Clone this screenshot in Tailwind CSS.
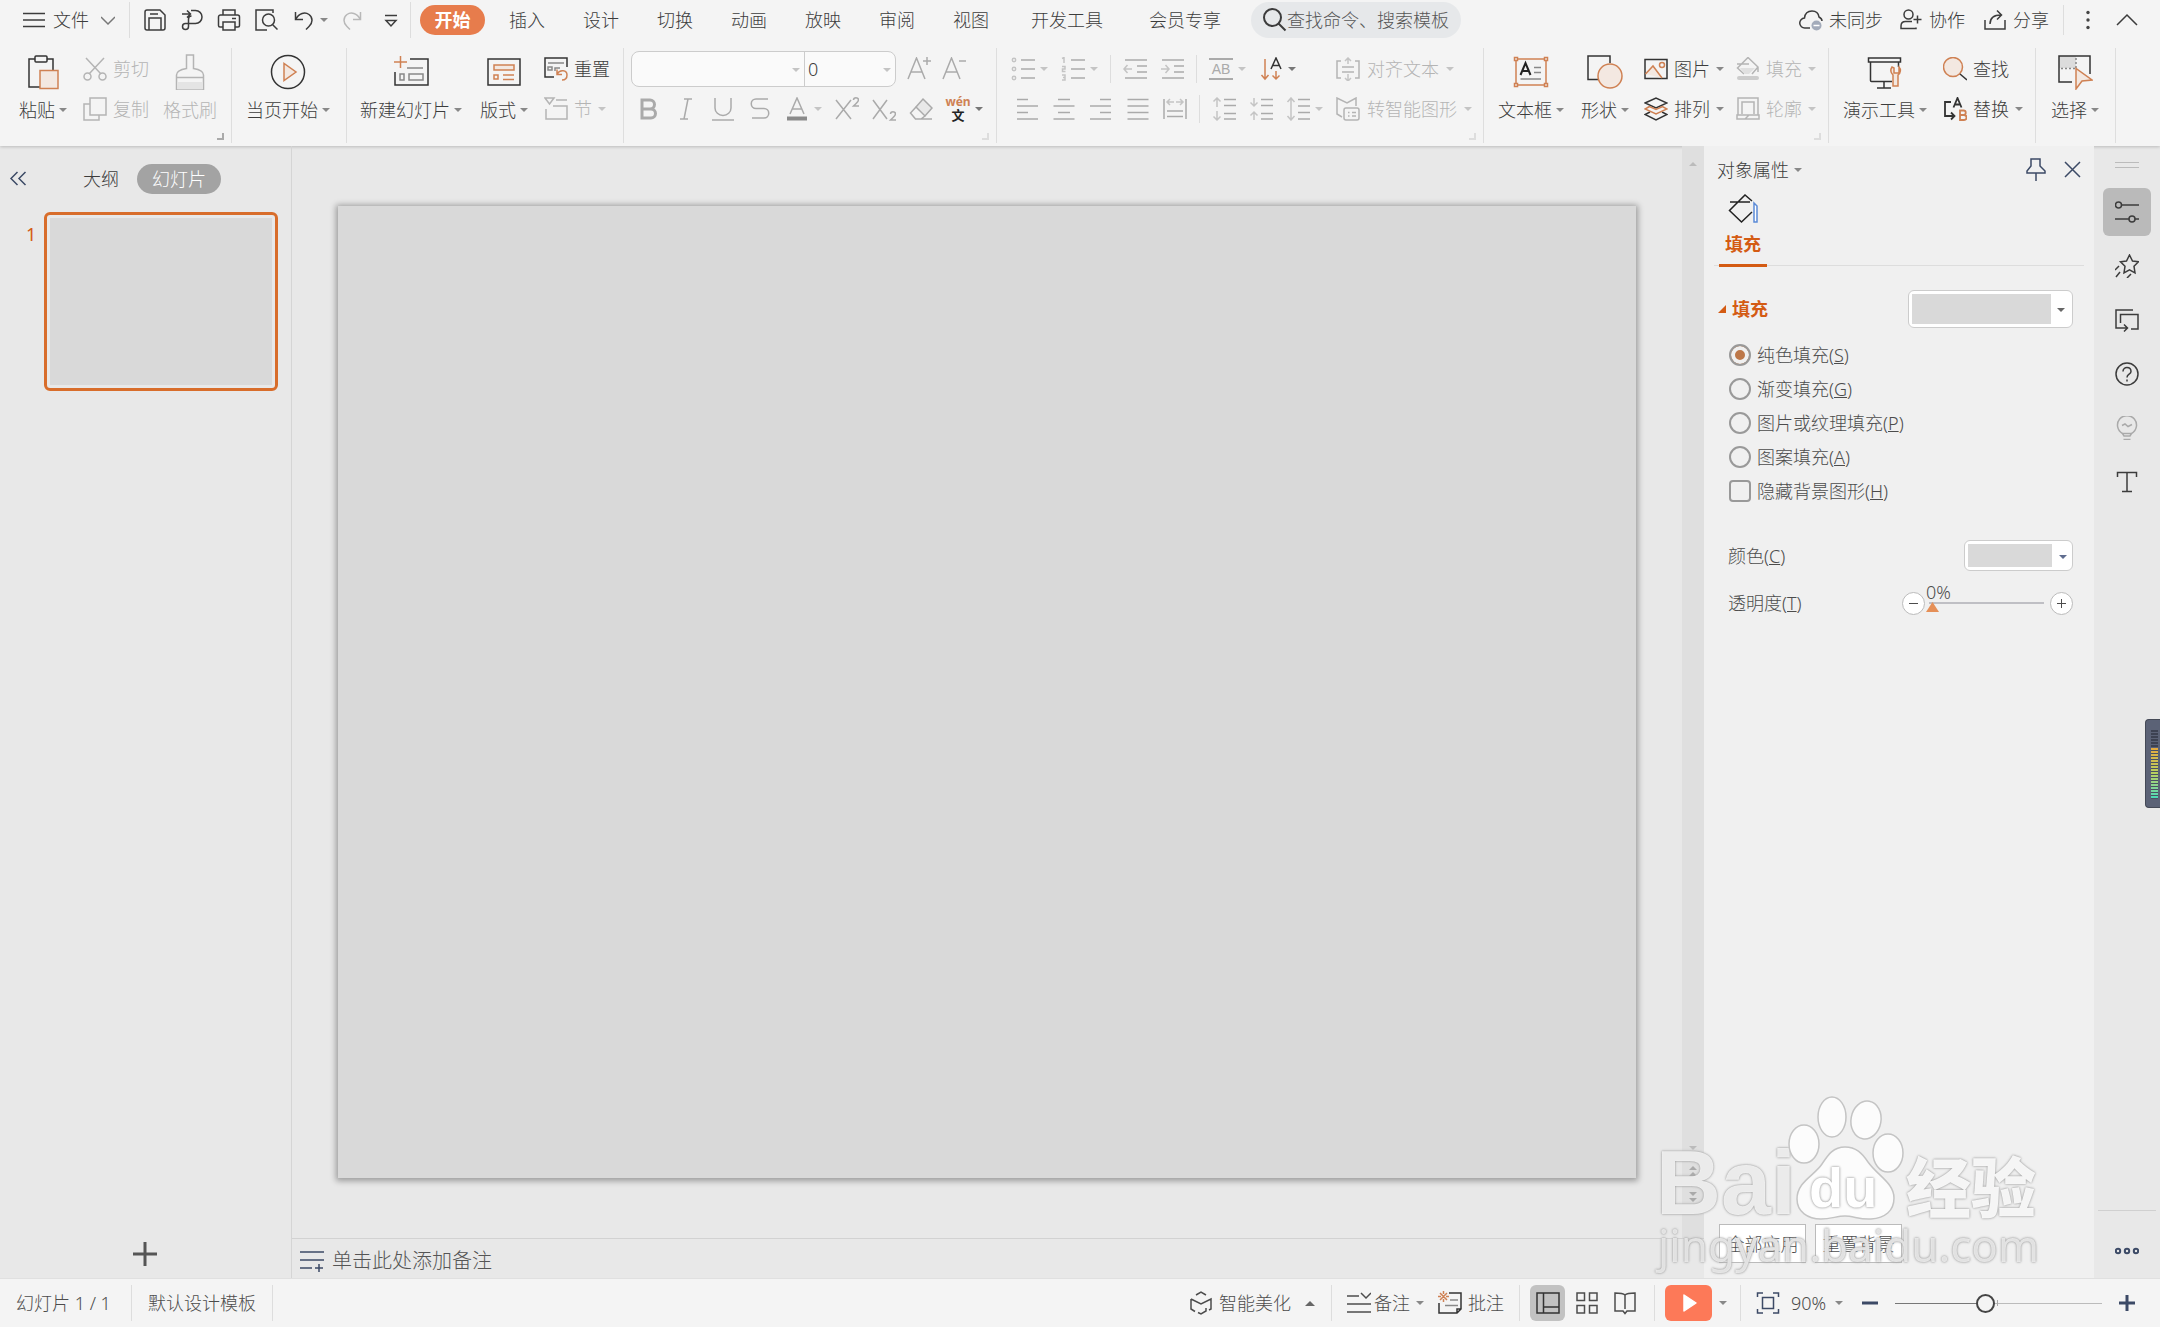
<!DOCTYPE html>
<html lang="zh-CN">
<head>
<meta charset="utf-8">
<title>演示文稿</title>
<script src="https://cdn.jsdelivr.net/npm/@tailwindcss/browser@4"></script>
</head>
<body class="flex h-screen flex-col overflow-hidden bg-[#e8e8e8] font-['Noto_Sans','Noto_Sans_CJK_SC',sans-serif] text-[18px] leading-6 font-light text-[#3c3c3c] [&_button]:shrink-0 [&_button]:whitespace-nowrap [&_svg]:shrink-0 [&_svg]:fill-none [&_svg]:stroke-current [&_svg]:stroke-[1.5px]">

<header class="shrink-0 bg-[#f4f4f4] shadow-[0_1px_3px_#00000030]">
  <!-- menu bar -->
  <div class="flex h-10 items-center pl-[22px] pr-[21px]">
    <button class="flex items-center">
      <svg class="size-6" viewBox="0 0 24 24"><path d="M1 5.500h22M1 12h22M1 18.500h22"/></svg>
      <span class="ml-[7px]">文件</span>
      <svg class="ml-3 w-3.5 h-6" viewBox="0 0 14 24"><path stroke="#777" d="M0 9l7 7 7-7"/></svg>
    </button>
    <span class="ml-3.5 h-9 w-px bg-[#ddd]"></span>
    <div class="ml-[13px] flex items-center gap-[13px]">
      <button aria-label="保存"><svg class="size-6" viewBox="0 0 24 24"><path d="M4 2h13l5 5v13a2 2 0 0 1-2 2H4a2 2 0 0 1-2-2V4a2 2 0 0 1 2-2zM6 22V10h12v12M7 6h8"/></svg></button>
      <button aria-label="输出"><svg class="size-6" viewBox="0 0 24 24"><path d="M2 6h8M7 2.500L10.500 6 7 9.500M11 2.500h4.500a6 6 0 0 1 0 13H5.500a3 3 0 1 0 3 3V11a3 3 0 0 1 3-3"/></svg></button>
      <button aria-label="打印"><svg class="size-6" viewBox="0 0 24 24"><path d="M6 7V2h12v5M6 19H3a1.500 1.500 0 0 1-1.500-1.500V9A2 2 0 0 1 3.500 7h17a2 2 0 0 1 2 2v8.500A1.500 1.500 0 0 1 21 19h-3M6 14h12v8H6zM15 10.500h4"/></svg></button>
      <button aria-label="打印预览"><svg class="size-6" viewBox="0 0 24 24"><path d="M19 5V2H2v20h11"/><circle cx="14.500" cy="12" r="6"/><path d="M18.500 16.500l5 5"/></svg></button>
      <button class="flex items-center gap-[5px]" aria-label="撤销"><svg class="size-6" viewBox="0 0 24 24"><path d="M4.500 4v7.500H12M4.500 11.500C8 5 14 3.500 18 6.500s4 8 0 12l-3 3"/></svg><i class="border-x-4 border-t-4 border-x-transparent border-t-[#888]"></i></button>
      <button class="text-[#b8b8b8]" aria-label="恢复"><svg class="size-6" viewBox="0 0 24 24"><path d="M19.500 4v7.500H12M19.500 11.500C16 5 10 3.500 6 6.500s-4 8 0 12l3 3"/></svg></button>
      <button aria-label="自定义快速访问工具栏"><svg class="size-6" viewBox="0 0 24 24"><path d="M7 7.500h12M8 12.500l5 5.500 5-5.500z"/></svg></button>
    </div>
    <span class="ml-2 h-9 w-px bg-[#ddd]"></span>
    <nav class="flex items-center">
      <button class="ml-[9px] mr-[5px] h-[30px] w-[65px] rounded-full bg-[#e77c4c] font-bold text-white">开始</button>
      <button class="w-[74px]">插入</button><button class="w-[74px]">设计</button><button class="w-[74px]">切换</button><button class="w-[74px]">动画</button><button class="w-[74px]">放映</button><button class="w-[74px]">审阅</button><button class="w-[74px]">视图</button>
      <button class="w-[118px]">开发工具</button><button class="w-[118px]">会员专享</button>
    </nav>
    <label class="ml-[7px] flex h-9 w-[210px] items-center rounded-full bg-[#e6e8ea] pl-3">
      <svg class="size-6" viewBox="0 0 24 24"><circle cx="9.500" cy="9.500" r="8.500" stroke-width="2"/><path stroke-width="2" d="M15.500 15.500l7 7"/></svg>
      <input class="w-[170px] bg-transparent font-light outline-none placeholder:text-[#555]" placeholder="查找命令、搜索模板" aria-label="查找命令、搜索模板">
    </label>
    <div class="ml-auto flex items-center">
      <button class="flex items-center gap-1.5"><svg class="size-6" viewBox="0 0 24 24"><path d="M11 20H6a5 5 0 0 1-.5-10C6 5.500 9 3 13 3c4 0 6.500 2.500 7 6 1.500.7 3 2 3 4"/><circle cx="17.500" cy="17.500" r="5" fill="#a3abba" stroke="none"/><path stroke="#fff" d="M14.500 17.500h6"/></svg>未同步</button>
      <button class="ml-4 flex items-center gap-1.5"><svg class="size-6" viewBox="0 0 24 24"><circle cx="9.500" cy="6.500" r="4.500"/><path d="M17 19.500v1H2v-2.500c0-3 2-4.500 4.500-4.500H13M18.500 7.500v8M14.500 11.500h8"/></svg>协作</button>
      <button class="ml-[18px] flex items-center gap-1.5"><svg class="size-6" viewBox="0 0 24 24"><path d="M2 12v9h20v-9M7 16c0-6 4-9 11-9M14 2.500L18.500 7 14 11.500"/></svg>分享</button>
      <span class="ml-3.5 h-[30px] w-px bg-[#ddd]"></span>
      <button class="ml-3" aria-label="更多"><svg class="size-6" viewBox="0 0 24 24"><g fill="#444" stroke="none"><circle cx="12" cy="4.500" r="1.700"/><circle cx="12" cy="12" r="1.700"/><circle cx="12" cy="19.500" r="1.700"/></g></svg></button>
      <button class="ml-[15px]" aria-label="折叠功能区"><svg class="size-6" viewBox="0 0 24 24"><path d="M2 17L12 7l10 10"/></svg></button>
    </div>
  </div>

  <!-- ribbon -->
  <div class="flex h-[106px] pt-2 [&>section]:relative [&>section]:flex [&>section]:h-[95px] [&>section]:shrink-0 [&>section]:border-r [&>section]:border-[#dedede]">
    <section class="pl-[19px] pr-3.5">
      <button class="flex flex-col items-center"><span class="flex h-12 items-center"><svg class="size-9" viewBox="0 0 36 36"><path stroke="#333" d="M15 33H4V5h6M22 5h6v11"/><rect x="10" y="2" width="12" height="6" rx="1" stroke="#333"/><rect x="15" y="16.500" width="18" height="18" fill="#f3e8e1" stroke="#cf8153"/></svg></span><span class="flex h-7 items-center gap-1">粘贴<i class="border-x-4 border-t-4 border-x-transparent border-t-[#888]"></i></span></button>
      <div class="ml-4 pt-px text-[#b4b4b4]">
        <button class="flex h-10 items-center gap-1.5"><svg class="size-6" viewBox="0 0 24 24"><path d="M3 1l15 16M21 1L6 17"/><circle cx="4.500" cy="19.500" r="3.500"/><circle cx="19.500" cy="19.500" r="3.500"/></svg>剪切</button>
        <button class="flex h-10 items-center gap-1.5"><svg class="size-6" viewBox="0 0 24 24"><path d="M7 1h16v17H7zM7 7H1v16h15v-5"/></svg>复制</button>
      </div>
      <button class="ml-3.5 flex flex-col items-center text-[#b4b4b4]"><span class="flex h-12 items-center"><svg class="size-9" viewBox="0 0 36 36"><path d="M14.500 1h7v13.500c6 1 10 2.500 10 6.500v15h-27V21c0-4 4-5.500 10-6.500zM4.500 23.500h27"/><path fill="#e4e4e4" stroke="none" d="M5 28h26v7H5z"/></svg></span><span class="flex h-7 items-center">格式刷</span></button>
      <i class="absolute right-[7px] bottom-[3px] size-[7px] border-r-2 border-b-2 border-[#aaa]"></i>
    </section>
    <section class="pl-3.5 pr-4">
      <button class="flex flex-col items-center"><span class="flex h-12 items-center"><svg class="size-9" viewBox="0 0 36 36"><circle cx="18" cy="18" r="16.500" stroke="#333"/><path fill="#f3e8e1" stroke="#cf8153" d="M14 9.500v17L26 18z"/></svg></span><span class="flex h-7 items-center gap-1">当页开始<i class="border-x-4 border-t-4 border-x-transparent border-t-[#888]"></i></span></button>
    </section>
    <section class="px-[13px]">
      <button class="flex flex-col items-center"><span class="flex h-12 items-center"><svg class="size-9" viewBox="0 0 36 36"><path stroke="#333" d="M17 5h18v26H2V18"/><path stroke="#cf8153" d="M7.500 2v12M1 8h13"/><path stroke="#888" d="M14 14h16M7 20h4v6H7zM16 20h14v6H16z"/></svg></span><span class="flex h-7 items-center gap-1">新建幻灯片<i class="border-x-4 border-t-4 border-x-transparent border-t-[#888]"></i></span></button>
      <button class="ml-[18px] flex flex-col items-center"><span class="flex h-12 items-center"><svg class="size-9" viewBox="0 0 36 36"><path stroke="#333" d="M2 5h32v26H2z"/><path fill="#f3e8e1" stroke="#cf8153" d="M8 11h20v5H8z"/><path stroke="#cf8153" d="M8 21h4v4H8zM17 21h11M17 25.500h11"/></svg></span><span class="flex h-7 items-center gap-1">版式<i class="border-x-4 border-t-4 border-x-transparent border-t-[#888]"></i></span></button>
      <div class="ml-4 pt-px">
        <button class="flex h-10 items-center gap-1.5"><svg class="size-6" viewBox="0 0 24 24"><path stroke="#333" d="M10 20H1V1h22v9"/><path stroke="#888" d="M4 6h16M4 10h4v3H4zM11 14v-3h5"/><path stroke="#cf8153" d="M13 12.500v5h5M13 17c3-5 10-4 10 1 0 3-2 5-5 5"/></svg>重置</button>
        <button class="flex h-10 items-center gap-1.5 text-[#b4b4b4]"><svg class="size-6" viewBox="0 0 24 24"><path d="M1 1h9L5.500 7zM12 3h11M2 12v10h21V9H9"/></svg>节<i class="border-x-4 border-t-4 border-x-transparent border-t-[#c4c4c4]"></i></button>
      </div>
    </section>
    <section class="flex-col! pr-[13px] pt-px text-[#aaa]">
      <div class="flex h-10 items-center pl-[7px]">
        <div class="flex h-9 w-[265px] rounded-lg border border-[#ccc] bg-[#fafafa]">
          <div class="relative flex-1"><select aria-label="字体" class="size-full appearance-none outline-none"><option></option></select><i class="pointer-events-none absolute top-4 right-1 border-x-4 border-t-4 border-x-transparent border-t-[#c4c4c4]"></i></div>
          <div class="relative w-[91px] border-l border-[#ccc]"><select aria-label="字号" class="size-full appearance-none pl-[3px] text-[#3c3c3c] outline-none"><option>0</option></select><i class="pointer-events-none absolute top-4 right-1 border-x-4 border-t-4 border-x-transparent border-t-[#c4c4c4]"></i></div>
        </div>
        <button class="ml-[11px]" aria-label="增大字号"><svg class="size-6" viewBox="0 0 24 24"><path d="M1 22L9.500 1 18 22M4 15h11M16 4h8M20 0v8"/></svg></button>
        <button class="ml-[11px]" aria-label="减小字号"><svg class="size-6" viewBox="0 0 24 24"><path d="M1 22L9.500 1 18 22M4 15h11M17 4h7"/></svg></button>
      </div>
      <div class="flex h-10 items-center gap-[13px] pl-[13px]">
        <button aria-label="加粗"><svg class="size-6" viewBox="0 0 24 24"><path stroke-width="3" d="M5 3h8a4.500 4.500 0 0 1 0 9H5zM5 12h9a4.500 4.500 0 0 1 0 9H5z"/></svg></button>
        <button aria-label="倾斜"><svg class="size-6" viewBox="0 0 24 24"><path d="M10 2h8M6 22h8M14 2l-4 20"/></svg></button>
        <button aria-label="下划线"><svg class="size-6" viewBox="0 0 24 24"><path d="M4 1v10a8 7.500 0 0 0 16 0V1M1 23h22"/></svg></button>
        <button aria-label="删除线"><svg class="size-6" viewBox="0 0 24 24"><path d="M20 2H8a4.500 4.500 0 0 0 0 9.500h8a4.500 4.500 0 0 1 0 9.500H4"/></svg></button>
        <button class="flex items-center gap-[5px]" aria-label="字体颜色"><svg class="size-6" viewBox="0 0 24 24"><path d="M5 17L12 1l7 16M7.500 12h9"/><path stroke="#8a8a8a" stroke-width="4" d="M2 21.500h20"/></svg><i class="border-x-4 border-t-4 border-x-transparent border-t-[#c4c4c4]"></i></button>
        <button aria-label="上标"><svg class="size-6" viewBox="0 0 24 24"><path d="M1 3l15 19M16 3L1 22M18.500 3c0-3 5-3 5 0 0 1.500-1 2-5 6h5.500"/></svg></button>
        <button aria-label="下标"><svg class="size-6" viewBox="0 0 24 24"><path d="M1 3l14 19M15 3L1 22M18.500 17c0-3 5-3 5 0 0 1.500-1 2-5 6h5.500"/></svg></button>
        <button aria-label="清除格式"><svg class="size-6" viewBox="0 0 24 24"><path fill="#e8e8e8" d="M14 2l9 9-7 8L7 10z"/><path d="M7 10l-5.500 6 5 6H12l4-3M12 22h11"/></svg></button>
        <button class="flex items-center gap-[5px]" aria-label="拼音指南"><span class="flex w-6 flex-col items-center font-bold"><span class="text-[12px] leading-3 text-[#cf8153]">wén</span><span class="text-[13px] leading-[14px] text-[#222]">文</span></span><i class="border-x-4 border-t-4 border-x-transparent border-t-[#777]"></i></button>
      </div>
      <i class="absolute right-[7px] bottom-[3px] size-[7px] border-r-2 border-b-2 border-[#ddd]"></i>
    </section>
    <section class="pt-px pr-[11px] text-[#aaa]">
      <div>
        <div class="flex h-10 items-center gap-[13px] pl-3.5">
          <button class="flex items-center gap-[5px]" aria-label="项目符号"><svg class="size-6" viewBox="0 0 24 24"><path d="M10 3h14M10 12h14M10 21h14"/><g stroke="#c4c4c4"><circle cx="3" cy="3" r="1.700"/><circle cx="3" cy="12" r="1.700"/><circle cx="3" cy="21" r="1.700"/></g></svg><i class="border-x-4 border-t-4 border-x-transparent border-t-[#c4c4c4]"></i></button>
          <button class="flex items-center gap-[5px]" aria-label="编号"><svg class="size-6" viewBox="0 0 24 24"><path d="M10 3h14M10 12h14M10 21h14"/><path stroke="#c4c4c4" d="M1 1.500L3 .5V6M1 9.500h3V12H1.500v2.500H4.500M1 18h3v5H1M2 20.500h2"/></svg><i class="border-x-4 border-t-4 border-x-transparent border-t-[#c4c4c4]"></i></button>
          <span class="-mx-px h-7 w-px bg-[#ddd]"></span>
          <button aria-label="减少缩进量"><svg class="size-6" viewBox="0 0 24 24"><path d="M2 3h22M14 9h10M14 15h10M2 21h22"/><path stroke="#c4c4c4" d="M9 12H1M4.500 8L1 12l3.500 4"/></svg></button>
          <button aria-label="增加缩进量"><svg class="size-6" viewBox="0 0 24 24"><path d="M2 3h22M14 9h10M14 15h10M2 21h22"/><path stroke="#c4c4c4" d="M1 12h8M5.500 8L9 12l-3.500 4"/></svg></button>
          <span class="-mx-px h-7 w-px bg-[#ddd]"></span>
          <button class="flex items-center gap-[5px]" aria-label="字符间距"><span class="w-6 border-y-2 border-[#aaa] py-px text-center font-['Liberation_Sans'] text-[14px] leading-4 font-normal">AB</span><i class="border-x-4 border-t-4 border-x-transparent border-t-[#c4c4c4]"></i></button>
          <button class="flex items-center gap-[5px]" aria-label="文字方向"><svg class="size-6" viewBox="0 0 24 24"><path stroke="#cf8153" d="M6 2v20M2.500 18L6 22l3.500-4M17 14v8M13.500 18.500L17 22l3.500-3.500"/><path stroke="#333" d="M12 12l5-11 5 11M13.500 8.500h7"/></svg><i class="border-x-4 border-t-4 border-x-transparent border-t-[#777]"></i></button>
        </div>
        <div class="flex h-10 items-center gap-[13px] pl-[18px]">
          <button aria-label="左对齐"><svg class="size-6" viewBox="0 0 24 24"><path d="M2 2.500h11M2 9h21M2 15.500h11M2 22h21"/></svg></button>
          <button aria-label="居中对齐"><svg class="size-6" viewBox="0 0 24 24"><path d="M6 2.500h12M1.500 9h21M6 15.500h12M1.500 22h21"/></svg></button>
          <button aria-label="右对齐"><svg class="size-6" viewBox="0 0 24 24"><path d="M11 2.500h11M1 9h21M11 15.500h11M1 22h21"/></svg></button>
          <button aria-label="两端对齐"><svg class="size-6" viewBox="0 0 24 24"><path d="M1.500 2.500h21M1.500 9h21M1.500 15.500h21M1.500 22h21"/></svg></button>
          <button aria-label="分散对齐"><svg class="size-6" viewBox="0 0 24 24"><path d="M1 2v20M23 2v20M4 14h16M4 19.500h16"/><path stroke="#c4c4c4" d="M4 5h7M13 5h7M7 2L4 5l3 3M17 2l3 3-3 3"/></svg></button>
          <span class="-mx-px h-7 w-px bg-[#ddd]"></span>
          <button aria-label="增大段落间距"><svg class="size-6" viewBox="0 0 24 24"><path d="M12 2.500h12M12 8.500h12M12 16.500h12M12 22h12"/><path stroke="#c4c4c4" d="M5 10V1M1.500 4.500L5 1l3.500 3.500M5 14v9M1.500 19.500L5 23l3.500-3.500"/></svg></button>
          <button aria-label="减小段落间距"><svg class="size-6" viewBox="0 0 24 24"><path d="M12 2.500h12M12 8.500h12M12 16.500h12M12 22h12"/><path stroke="#c4c4c4" d="M5 1v8M1.500 5.500L5 9l3.500-3.500M5 23v-8M1.500 18.500L5 15l3.500 3.500"/></svg></button>
          <button class="flex items-center gap-[5px]" aria-label="行距"><svg class="size-6" viewBox="0 0 24 24"><path d="M12 2.500h12M12 9h12M12 15.500h12M12 22h12"/><path stroke="#c4c4c4" d="M5 1v22M1.500 5L5 1l3.500 4M1.500 19L5 23l3.500-4"/></svg><i class="border-x-4 border-t-4 border-x-transparent border-t-[#c4c4c4]"></i></button>
        </div>
      </div>
      <div class="ml-[13px] text-[#b4b4b4]">
        <button class="flex h-10 items-center gap-[7px]"><svg class="size-6" viewBox="0 0 24 24"><path d="M5 4H1v17h4M19 4h4v17h-4M6 10h12M6 15h12"/><path stroke="#c4c4c4" d="M12 7V1M9 4l3-3 3 3M12 17v7M9 21l3 3 3-3"/></svg>对齐文本<i class="border-x-4 border-t-4 border-x-transparent border-t-[#c4c4c4]"></i></button>
        <button class="flex h-10 items-center gap-[7px]"><svg class="size-6" viewBox="0 0 24 24"><path d="M6 20l-5-3V1l10 5 9-5v8"/><rect x="8" y="11" width="15" height="12" rx="2"/><path d="M12 15.500h1.500M16 15.500h4M12 19h1.500M16 19h4"/></svg>转智能图形<i class="border-x-4 border-t-4 border-x-transparent border-t-[#c4c4c4]"></i></button>
      </div>
      <i class="absolute right-[7px] bottom-[3px] size-[7px] border-r-2 border-b-2 border-[#ddd]"></i>
    </section>
    <section class="pl-3.5 pr-3">
      <button class="flex flex-col items-center"><span class="flex h-12 items-center"><svg class="size-9" viewBox="0 0 36 36"><path stroke="#cf8153" d="M3 5h30v26H3z"/><g fill="#f4f4f4" stroke="#cf8153"><rect x="1.500" y="3.500" width="3" height="3"/><rect x="31.500" y="3.500" width="3" height="3"/><rect x="1.500" y="29.500" width="3" height="3"/><rect x="31.500" y="29.500" width="3" height="3"/></g><path stroke="#222" stroke-width="2" d="M7.500 21l5-12 5 12M9 17h7"/><path stroke="#888" d="M21 13.500h7M21 18.500h7M7.500 25h20.500"/></svg></span><span class="flex h-7 items-center gap-1">文本框<i class="border-x-4 border-t-4 border-x-transparent border-t-[#888]"></i></span></button>
      <button class="ml-[17px] flex flex-col items-center"><span class="flex h-12 items-center"><svg class="size-9" viewBox="0 0 36 36"><path stroke="#333" d="M11 25.500H1V2h22v7"/><circle cx="23" cy="22" r="12" fill="#f3e8e1" stroke="#cf8153"/></svg></span><span class="flex h-7 items-center gap-1">形状<i class="border-x-4 border-t-4 border-x-transparent border-t-[#888]"></i></span></button>
      <div class="ml-[15px] pt-px">
        <button class="flex h-10 items-center gap-1.5"><svg class="size-6" viewBox="0 0 24 24"><path stroke="#333" d="M1 2.500h22v19H1z"/><path fill="#f3e8e1" stroke="#cf8153" d="M1.500 17L9 9l9 12"/><circle cx="18" cy="8" r="2.500" stroke="#cf8153"/></svg>图片<i class="border-x-4 border-t-4 border-x-transparent border-t-[#888]"></i></button>
        <button class="flex h-10 items-center gap-1.5"><svg class="size-6" viewBox="0 0 24 24"><path stroke="#333" d="M1 6l11-5 11 5-11 5zM6 15l-5 2.500L12 23l11-5.500-5-2.500"/><path stroke="#cf8153" d="M5.500 9.500L1 12l11 5 11-5-4.500-2.500-6.500 3z"/></svg>排列<i class="border-x-4 border-t-4 border-x-transparent border-t-[#888]"></i></button>
      </div>
      <div class="ml-3 pt-px text-[#b4b4b4]">
        <button class="flex h-10 items-center gap-1.5"><svg class="size-6" viewBox="0 0 24 24"><path d="M1 7h12M22 15v-5L12 .5 1.500 11 8 17M22 10l-6 7"/><path fill="#e0e0e0" stroke="none" d="M4 11h15l-6 6H9z"/><path stroke="#ccc" stroke-width="4" stroke-linecap="round" d="M3 21h18"/></svg>填充<i class="border-x-4 border-t-4 border-x-transparent border-t-[#c4c4c4]"></i></button>
        <button class="flex h-10 items-center gap-1.5"><svg class="size-6" viewBox="0 0 24 24"><path d="M2 18V1h20v17M6 17V5h12v12M1 18h22v4H1zM9 22l4-4"/></svg>轮廓<i class="border-x-4 border-t-4 border-x-transparent border-t-[#c4c4c4]"></i></button>
      </div>
      <i class="absolute right-[7px] bottom-[3px] size-[7px] border-r-2 border-b-2 border-[#ddd]"></i>
    </section>
    <section class="pl-3.5 pr-3">
      <button class="flex flex-col items-center"><span class="flex h-12 items-center"><svg class="size-9" viewBox="0 0 36 36"><path stroke="#333" d="M1.500 4h32v4h-32zM3.500 8v18.500a1 1 0 0 0 1 1H25M31.500 8v5M17 28v6M10 34h14"/><path fill="#f3e8e1" stroke="#cf8153" d="M25 13c-2 3-1 6 1 8v11h5V21c3-2 3-6 1-8v6h-5v-5z"/></svg></span><span class="flex h-7 items-center gap-1">演示工具<i class="border-x-4 border-t-4 border-x-transparent border-t-[#888]"></i></span></button>
      <div class="ml-4 pt-px">
        <button class="flex h-10 items-center gap-1.5"><svg class="size-6" viewBox="0 0 24 24"><circle cx="10" cy="10" r="9.500" fill="#f3e8e1" stroke="#cf8153"/><path stroke="#333" d="M17 17l7 6"/></svg>查找</button>
        <button class="flex h-10 items-center gap-1.5"><svg class="size-6" viewBox="0 0 24 24"><path stroke="#333" stroke-width="1.800" d="M8 5H2v14h9M8 15.500l3.500 3.500L8 22.500M10.500 10.500L14.500 1l4 9.500M12 7.500h5"/><path stroke="#cf8153" stroke-width="1.800" d="M17 13.500h3.500a2.200 2.200 0 0 1 0 4.500H17zM17 18h4a2.200 2.200 0 0 1 0 5H17z"/></svg>替换<i class="border-x-4 border-t-4 border-x-transparent border-t-[#888]"></i></button>
      </div>
    </section>
    <section class="pl-[15px] pr-4">
      <button class="flex flex-col items-center"><span class="flex h-12 items-center"><svg class="size-9" viewBox="0 0 36 36"><path fill="#dcdcdc" stroke="none" d="M2 2h17v12H2z"/><path stroke="#333" d="M15 28H2V2h31v18"/><path stroke="#888" stroke-dasharray="2 2" d="M4 14.500h14M19 4v10"/><path fill="#f3e8e1" stroke="#cf8153" d="M19 14.500v20.500l6-8 10-1z"/></svg></span><span class="flex h-7 items-center gap-1">选择<i class="border-x-4 border-t-4 border-x-transparent border-t-[#888]"></i></span></button>
    </section>
  </div>
</header>

<main class="flex min-h-0 flex-1">
  <!-- slide list -->
  <aside class="flex w-[292px] shrink-0 flex-col border-r border-[#d5d5d5]">
    <div class="mt-[18px] flex h-[30px] items-center pl-1.5">
      <button aria-label="收起"><svg class="size-6 text-[#3c4a66]" viewBox="0 0 24 24"><path d="M11.500 5L5 11.500l6.500 6.500M19.500 5L13 11.500l6.500 6.500"/></svg></button>
      <button class="ml-[53px]">大纲</button>
      <button class="ml-[18px] h-[30px] w-[84px] rounded-full bg-[#a3a3a3] text-white">幻灯片</button>
    </div>
    <div class="mt-[18px] flex pl-[26px]">
      <span class="mt-2.5 w-[18px] font-normal text-[#d45b13]">1</span>
      <button class="h-[179px] w-[234px] rounded-md border-3 border-[#d86d2b] p-[3px]" aria-label="幻灯片 1"><span class="block size-full bg-[#d9d9d9]"></span></button>
    </div>
    <button class="mt-auto mb-3 pr-0.5 self-center" aria-label="新建幻灯片"><svg class="size-6" viewBox="0 0 24 24"><path stroke="#555" stroke-width="3" d="M12 0v24M0 12h24"/></svg></button>
  </aside>

  <!-- slide canvas -->
  <div class="flex min-w-0 flex-1 flex-col">
    <div class="flex min-h-0 flex-1">
      <div class="flex-1 px-[46px] py-[60px]"><div class="h-full bg-[#d9d9d9] shadow-[0_1px_6px_2px_#00000055]"></div></div>
      <div class="flex w-[22px] flex-col items-center bg-[#dfdfdf] pt-4 pb-9">
        <i class="border-x-4 border-b-4 border-x-transparent border-b-[#bbb]"></i>
        <i class="mt-auto border-x-4 border-t-4 border-x-transparent border-t-[#bbb]"></i>
        <i class="mt-4 border-x-4 border-b-4 border-x-transparent border-b-[#aaa]"></i>
        <i class="mt-0.5 border-x-4 border-b-4 border-x-transparent border-b-[#aaa]"></i>
        <i class="mt-4 border-x-4 border-t-4 border-x-transparent border-t-[#aaa]"></i>
        <i class="mt-0.5 border-x-4 border-t-4 border-x-transparent border-t-[#aaa]"></i>
      </div>
    </div>
    <div class="flex h-10 items-center gap-2 border-t border-[#d2d2d2] pl-2 pt-1">
      <svg class="size-6 text-[#3c4a66]" viewBox="0 0 24 24"><path d="M0 3h24M0 11h24M0 19h12M15 19h8M19 15v8"/></svg>
      <span class="text-[20px] text-[#555]">单击此处添加备注</span>
    </div>
  </div>

  <!-- object properties -->
  <aside class="flex w-[390px] shrink-0 flex-col bg-[#f0f0f0] text-[#4c4c4c]">
    <div class="flex h-12 items-center pr-[9px] pl-[13px]">
      <button class="flex items-center gap-[5px] text-[#3c3c3c]">对象属性<i class="border-x-4 border-t-4 border-x-transparent border-t-[#888]"></i></button>
      <button class="ml-auto text-[#3c4a66]" aria-label="固定"><svg class="size-6" viewBox="0 0 24 24"><path d="M7 1h9v7l5 5v2H3v-2l4-5zM12 15v8"/></svg></button>
      <button class="ml-[13px] text-[#3c4a66]" aria-label="关闭"><svg class="size-6" viewBox="0 0 24 24"><path d="M4 4l15 15M19 4L4 19"/></svg></button>
    </div>
    <div class="mx-2.5 flex border-b border-[#ddd] pl-[5px]">
      <button class="-mb-0.5 flex w-12 flex-col items-center border-b-3 border-[#d45b13] font-bold text-[#d45b13]">
        <svg class="size-[30px]" viewBox="0 0 30 30"><path stroke="#222" d="M24 7l-7-6L1.500 16.500 13.500 28 24 18M2 8h20"/><path fill="#fff" stroke="#5b8ad6" d="M26 9l3 3v16h-3z"/></svg>
        <span class="leading-10">填充</span>
      </button>
    </div>
    <div class="mt-6 flex h-[38px] items-center pr-[21px] pl-3.5">
      <svg class="size-2" viewBox="0 0 8 8"><path fill="#d45b13" stroke="none" d="M8 0v8H0z"/></svg>
      <h2 class="ml-1.5 font-bold text-[#d45b13]">填充</h2>
      <div class="relative ml-auto h-[38px] w-[165px]"><select aria-label="填充样式" class="size-full appearance-none rounded-md border border-[#ccc] bg-white"><option></option></select><span class="pointer-events-none absolute inset-y-1 right-[22px] left-1 bg-[#d9d9d9]"></span><i class="pointer-events-none absolute top-[18px] right-2 border-x-4 border-t-4 border-x-transparent border-t-[#666]"></i></div>
    </div>
    <div class="mt-2.5 pl-[25px] [&>label]:flex [&>label]:h-[34px] [&>label]:items-center [&>label]:gap-1.5 [&_input]:size-[22px] [&_input]:appearance-none [&_input]:border-2 [&_input]:border-[#999]">
      <label><input type="radio" name="fill" checked class="rounded-full checked:bg-[#bd7748] checked:shadow-[inset_0_0_0_4px_#f0f0f0]"><span>纯色填充(<u>S</u>)</span></label>
      <label><input type="radio" name="fill" class="rounded-full"><span>渐变填充(<u>G</u>)</span></label>
      <label><input type="radio" name="fill" class="rounded-full"><span>图片或纹理填充(<u>P</u>)</span></label>
      <label><input type="radio" name="fill" class="rounded-full"><span>图案填充(<u>A</u>)</span></label>
      <label><input type="checkbox" class="rounded-sm"><span>隐藏背景图形(<u>H</u>)</span></label>
    </div>
    <div class="mt-8 flex h-[31px] items-center pr-[21px] pl-6">
      <label for="color">颜色(<u>C</u>)</label>
      <div class="relative ml-auto h-[31px] w-[109px]"><select id="color" class="size-full appearance-none rounded-md border border-[#ccc] bg-white"><option></option></select><span class="pointer-events-none absolute inset-y-1 right-[21px] left-1 bg-[#d9d9d9]"></span><i class="pointer-events-none absolute top-[15px] right-[6px] border-x-4 border-t-4 border-x-transparent border-t-[#5f6d8f]"></i></div>
    </div>
    <div class="mt-[15px] flex h-[34px] items-center pr-[21px] pl-6">
      <label for="alpha">透明度(<u>T</u>)</label>
      <button class="ml-auto flex size-[23px] items-center justify-center rounded-full border border-[#bbb] bg-white" aria-label="减少"><svg class="size-[11px]" viewBox="0 0 11 11"><path stroke-width="1" d="M1 5.500h9"/></svg></button>
      <div class="relative mr-1.5 ml-px h-6 w-[118px]">
        <output for="alpha" class="absolute bottom-[13px] left-0 leading-5">0%</output>
        <span class="absolute top-[11px] right-0 left-[3px] h-0.5 bg-[#bfbfc4]"></span>
        <input id="alpha" type="range" min="0" max="100" value="0" class="absolute top-[11px] left-0 h-2.5 w-full appearance-none bg-transparent [&::-webkit-slider-thumb]:h-2.5 [&::-webkit-slider-thumb]:w-[13px] [&::-webkit-slider-thumb]:appearance-none [&::-webkit-slider-thumb]:bg-[#e58f57] [&::-webkit-slider-thumb]:[clip-path:polygon(50%_0,100%_100%,0_100%)]">
      </div>
      <button class="flex size-[23px] items-center justify-center rounded-full border border-[#bbb] bg-white" aria-label="增加"><svg class="size-[11px]" viewBox="0 0 11 11"><path stroke-width="1" d="M1 5.500h9M5.500 1v9"/></svg></button>
    </div>
    <div class="mt-auto mb-[15px] flex gap-[9px] pl-[15px]">
      <button class="h-[39px] w-[87px] border border-[#bbb] bg-white">全部应用</button>
      <button class="h-[39px] w-[87px] border border-[#bbb] bg-white">重置背景</button>
    </div>
  </aside>

  <!-- side toolbar -->
  <aside class="flex w-[66px] shrink-0 flex-col items-center pt-4">
    <span class="h-1.5 w-6 border-y border-[#bbb]"></span>
    <button class="mt-5 flex size-12 items-center justify-center rounded-md bg-[#bababa]" aria-label="对象属性"><svg class="size-6" viewBox="0 0 24 24"><circle cx="3.500" cy="5" r="3"/><path d="M6.500 5H24M0 19h14M20 19h4"/><circle cx="17" cy="19" r="3"/></svg></button>
    <button class="mt-[18px]" aria-label="动画"><svg class="size-6" viewBox="0 0 24 24"><path d="M14.500 1l3 6 6 .8-4.500 4.500 1 6.500-5.500-3-5.500 3 1-6.500L5.500 7.800l6-.8zM4 12l-4 4M5 18l-4 5M16 20l-4 4"/></svg></button>
    <button class="mt-[30px]" aria-label="切换"><svg class="size-6" viewBox="0 0 24 24"><path d="M18 2H1v18h11M9 16.500l3.500 3.500L9 23.500M5.500 15V6.500h17.500V21h-7"/></svg></button>
    <button class="mt-[30px]" aria-label="帮助"><svg class="size-6" viewBox="0 0 24 24"><circle cx="12" cy="12" r="11"/><path d="M8 9.500c0-5.500 8-5 8 0 0 3-4 2.500-4 6M12 17.500v2"/></svg></button>
    <button class="mt-[30px] text-[#aaa]" aria-label="灵感"><svg class="size-6" viewBox="0 0 24 24"><path d="M7.500 17.500a9.500 9.500 0 1 1 9 0L15 20H9zM7 9.500l3-1.500 3 2.500 4-2M8 17.500h8M8.500 23.500h7"/></svg></button>
    <button class="mt-[30px]" aria-label="文本"><svg class="size-6" viewBox="0 0 24 24"><path d="M2.500 7V2.500h19V7M12 2.500v19M7 21.500h10"/></svg></button>
    <span class="mt-auto h-px w-[58px] bg-[#d0d0d0]"></span>
    <button class="mt-7 mb-[15px] text-[#3c4a66]" aria-label="更多"><svg class="size-6" viewBox="0 0 24 24"><g stroke-width="2"><circle cx="3" cy="12" r="2.200"/><circle cx="12" cy="12" r="2.200"/><circle cx="21" cy="12" r="2.200"/></g></svg></button>
  </aside>
</main>

<!-- status bar -->
<footer class="flex h-[49px] shrink-0 items-center border-t border-[#e0e0e0] bg-[#f4f4f4] pr-[21px] pl-4 text-[#4c4c4c]">
  <span class="w-[115px]">幻灯片 1 / 1</span>
  <span class="h-9 w-px bg-[#ddd]"></span>
  <button class="px-4">默认设计模板</button>
  <span class="h-9 w-px bg-[#ddd]"></span>
  <button class="ml-auto flex items-center gap-1.5"><svg class="size-6" viewBox="0 0 24 24"><path d="M7 4l5-3 5 3M2 8v10l4 2.500M2 8l10 5 10-5v10l-2 1M9 21.500l3 1.500 5-3V17"/></svg>智能美化<i class="ml-2 border-x-5 border-b-5 border-x-transparent border-b-[#666]"></i></button>
  <span class="ml-4 h-9 w-px bg-[#ddd]"></span>
  <button class="ml-[15px] flex items-center gap-[3px]"><svg class="size-6" viewBox="0 0 24 24"><path d="M0 5h12M0 13h24M0 21h24M14 2l5 5 5-5"/></svg>备注<i class="ml-[3px] border-x-4 border-t-4 border-x-transparent border-t-[#888]"></i></button>
  <button class="ml-3.5 flex items-center gap-1.5"><svg class="size-6" viewBox="0 0 24 24"><path stroke="#333" d="M11 2h12v16l-4 4H1v-10M23 18h-4v4"/><path stroke="#888" d="M12 9h8M7 14.500h13"/><path stroke="#cf8153" d="M2 2l7 7M9 2L2 9M5.500 0v3M5.500 8v3M0 5.500h3M8 5.500h3"/></svg>批注</button>
  <span class="ml-[15px] h-9 w-px bg-[#ddd]"></span>
  <button class="ml-2.5 flex h-9 w-[35px] items-center justify-center rounded-md bg-[#c2c2c2]" aria-label="普通视图"><svg class="size-6" viewBox="0 0 24 24"><path stroke="#333" d="M1 2h22v20H1zM7.500 2v20M7.500 16H23"/></svg></button>
  <button class="ml-2.5" aria-label="幻灯片浏览"><svg class="size-6" viewBox="0 0 24 24"><path d="M2 2h7.500v7.500H2zM14.500 2H22v7.500h-7.500zM2 14.500h7.500V22H2zM14.500 14.500H22V22h-7.500z"/></svg></button>
  <button class="ml-3.5" aria-label="阅读视图"><svg class="size-6" viewBox="0 0 24 24"><path d="M12 4c-2-2-5-2-10-2v18h8l2 2.500 2-2.500h8V2c-5 0-8 0-10 2zM12 4v14"/></svg></button>
  <span class="ml-[17px] h-9 w-px bg-[#ddd]"></span>
  <button class="ml-2.5 flex h-9 w-[47px] items-center justify-center rounded-md bg-[#fd7958]" aria-label="从当前幻灯片开始播放"><svg class="size-5" viewBox="0 0 20 20"><path fill="#fff" stroke="#fff" stroke-linejoin="round" d="M5 2v16l12-8z"/></svg></button>
  <button class="ml-[7px]" aria-label="播放选项"><i class="block border-x-4 border-t-4 border-x-transparent border-t-[#888]"></i></button>
  <span class="ml-[13px] h-9 w-px bg-[#ddd]"></span>
  <button class="ml-[15px] text-[#3c4a66]" aria-label="最佳显示比例"><svg class="size-6" viewBox="0 0 24 24"><path d="M1.500 6V2H7M17 2h5.500v4M22.500 18v4H17M7 22H1.500v-4M6.500 6.500h11v11h-11z"/></svg></button>
  <button class="ml-[11px] flex w-[52px] items-center justify-between">90%<i class="border-x-4 border-t-4 border-x-transparent border-t-[#888]"></i></button>
  <button class="ml-[15px] text-[#3c4a66]" aria-label="缩小"><svg class="size-6" viewBox="0 0 24 24"><path stroke-width="3" d="M4 12h16"/></svg></button>
  <div class="relative ml-[13px] flex h-6 w-[207px] items-center">
    <span class="absolute top-3 left-0 h-px w-full bg-linear-to-r from-[#777] from-45% to-[#bbb] to-45%"></span>
    <span class="absolute top-[9px] left-[102px] h-1.5 w-px bg-[#aaa]"></span>
    <input type="range" aria-label="显示比例" value="43" class="relative w-full appearance-none bg-transparent [&::-webkit-slider-thumb]:size-[19px] [&::-webkit-slider-thumb]:appearance-none [&::-webkit-slider-thumb]:rounded-full [&::-webkit-slider-thumb]:border-2 [&::-webkit-slider-thumb]:border-[#444] [&::-webkit-slider-thumb]:bg-[#f4f4f4]">
  </div>
  <button class="ml-[13px] text-[#3c4a66]" aria-label="放大"><svg class="size-6" viewBox="0 0 24 24"><path stroke-width="3" d="M4 12h16M12 4v16"/></svg></button>
</footer>

<!-- floating level meter -->
<div class="fixed top-[719px] right-0 h-[89px] w-[15px] rounded-l border border-r-0 border-[#444956] bg-[#5b6276] pt-2.5 pl-[5px]">
  <div class="h-[18px] w-[7px] bg-[repeating-linear-gradient(#3d4252_0_2px,#5b6276_2px_3px)]"></div>
  <div class="relative h-[51px] w-[7px] bg-linear-to-b from-[#e5a93e] via-[#b5d060] to-[#3fd9b8]"><div class="absolute inset-0 bg-[repeating-linear-gradient(transparent_0_2px,#4a5062_2px_3px)]"></div></div>
</div>

<!-- watermark -->
<div class="pointer-events-none fixed right-[118px] bottom-[48px] h-[186px] w-[390px] font-bold text-white/80 [text-shadow:0_0_2px_#999,0_0_3px_#bbb]">
  <span class="absolute top-[40px] left-[4px] font-['Liberation_Sans'] text-[90px] leading-[100px]">Bai</span>
  <svg class="absolute top-0 left-[134px] h-[130px] w-[122px]" viewBox="0 0 122 130"><g fill="#fcfcfc" stroke="#c4c4c4"><ellipse cx="18" cy="51" rx="15" ry="19"/><ellipse cx="46" cy="24" rx="14" ry="20"/><ellipse cx="80" cy="27" rx="15" ry="19" transform="rotate(10 80 27)"/><ellipse cx="102" cy="60" rx="15" ry="19"/><path d="M59 54c-12 0-17 8-23 17-8 12-25 18-25 35 0 13 11 20 24 20 10 0 16-3 24-3s16 4 26 3c14-1 23-8 23-21 0-15-16-22-26-36-6-9-12-15-23-15z"/></g></svg>
  <span class="absolute top-[62px] left-[157px] font-['Liberation_Sans'] text-[56px] leading-[66px] text-white">du</span>
  <span class="absolute top-[54px] left-[254px] text-[65px] leading-[80px] font-black text-white/90">经验</span>
  <span class="absolute top-[122px] left-[6px] text-[44px] leading-[60px] font-normal text-white/70">jingyan.baidu.com</span>
</div>
</body>
</html>
